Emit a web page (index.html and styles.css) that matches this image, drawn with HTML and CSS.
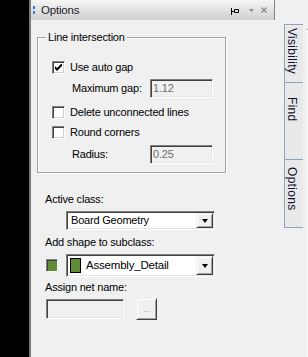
FILE: index.html
```html
<!DOCTYPE html>
<html lang="en">
  <head>
    <meta charset="UTF-8" />
    <title>Options</title>
    <link rel="stylesheet" href="styles.css">
  </head>
  <body>
    <div class="screen">
      <div class="backdrop"></div>

      <div class="pane">
        <div class="titlebar">
          <span class="grip"><i></i><i></i></span>
          <span class="title">Options</span>
          <span class="title-buttons">
            <svg class="pin" width="8" height="7" viewBox="0 0 8 7">
              <path d="M0.5 0v7M1 3.5h2M3.5 1.5h4v3h-4z" fill="none" stroke="#000" stroke-width="1"/>
            </svg>
            <svg class="menu" width="5" height="3" viewBox="0 0 5 3">
              <polygon points="0,0 5,0 2.5,3" fill="#8a8a8a"/>
            </svg>
            <svg class="close" width="6" height="6" viewBox="0 0 6 6">
              <path d="M0.5 0.5l5 5M5.5 0.5l-5 5" stroke="#8a8a8a" stroke-width="1.3"/>
            </svg>
          </span>
        </div>

        <div class="content">
          <div class="group">
            <div class="group-title">Line intersection</div>

            <div class="row check-row first">
              <span class="checkbox">
                <svg width="7" height="7" viewBox="0 0 7 7">
                  <path d="M0 2v3l2 2 5-5V-1L2 4z" fill="#000"/>
                </svg>
              </span>
              <span>Use auto gap</span>
            </div>
            <div class="row field-row gap-row">
              <span class="field-label">Maximum gap:</span>
              <span class="textbox">1.12</span>
            </div>
            <div class="row check-row delete-row">
              <span class="checkbox"></span>
              <span>Delete unconnected lines</span>
            </div>
            <div class="row check-row">
              <span class="checkbox"></span>
              <span>Round corners</span>
            </div>
            <div class="row field-row radius-row">
              <span class="field-label">Radius:</span>
              <span class="textbox">0.25</span>
            </div>
          </div>

          <div class="label class-label">Active class:</div>
          <div class="combo class-combo">
            <span class="combo-text">Board Geometry</span>
            <span class="combo-btn"><i class="arrow"></i></span>
          </div>

          <div class="label">Add shape to subclass:</div>
          <div class="subclass-row">
            <span class="swatch-small"></span>
            <div class="combo subclass-combo">
              <span class="swatch"></span>
              <span class="combo-text">Assembly_Detail</span>
              <span class="combo-btn"><i class="arrow"></i></span>
            </div>
          </div>

          <div class="label net-label">Assign net name:</div>
          <div class="net-row">
            <span class="net-input"></span>
            <span class="dots-btn">...</span>
          </div>
        </div>
      </div>

      <div class="tabstrip">
        <div class="tabs">
          <div class="tab tab-visibility">Visibility</div>
          <div class="tab tab-find">Find</div>
          <div class="tab tab-options">Options</div>
        </div>
        <div class="edge"></div>
      </div>
    </div>
  </body>
</html>
```

FILE: styles.css
```css
body {
  margin: 0;
  font-family: "Liberation Sans", Arial, sans-serif;
  font-size: 11px;
  line-height: 13px;
  letter-spacing: -0.2px;
  color: #000;
  background: #f0f0f0;
}

.screen {
  display: flex;
  width: 308px;
  height: 357px;
  overflow: hidden;
}

.backdrop {
  flex: none;
  width: 29px;
  background: #000;
  border-right: 2px solid #7a7a7a;
}

.pane {
  flex: none;
  width: 244px;
  display: flex;
  flex-direction: column;
}

/* title bar */
.titlebar {
  height: 20px;
  box-sizing: border-box;
  display: flex;
  align-items: center;
  padding: 0 7px 0 2px;
  background: linear-gradient(#f6f6f6, #cfcfcf);
  border-right: 1px solid #858585;
}

.grip {
  display: flex;
  flex-direction: column;
  gap: 2px;
  margin-right: 6px;
}

.grip i {
  display: block;
  width: 2px;
  height: 3px;
  background: #2b7de0;
}

.title {
  color: #1c1c30;
  font-size: 11.5px;
}

.title-buttons {
  margin-left: auto;
  display: flex;
  align-items: center;
}

.pin {
  margin-top: 3px;
}

.menu {
  margin-left: 10px;
}

.close {
  margin-left: 7px;
}

/* content */
.content {
  padding: 17px 0 0 6px;
}

.group {
  width: 189px;
  height: 136px;
  box-sizing: border-box;
  border: 1px solid #a0a0a0;
  box-shadow: inset 1px 1px #fff, 1px 1px #fff;
}

.group-title {
  width: max-content;
  margin: -7px 0 0 8px;
  padding: 0 2px;
  background: #f0f0f0;
}

.row {
  display: flex;
  align-items: center;
  height: 19px;
}

.row.first {
  margin-top: 14px;
}

.gap-row {
  margin-top: 2px;
}

.delete-row {
  margin-top: 5px;
}

.check-row + .check-row {
  margin-top: 1px;
}

.radius-row {
  margin-top: 3px;
}

.check-row {
  padding-left: 14px;
}

.checkbox {
  width: 13px;
  height: 13px;
  box-sizing: border-box;
  margin-right: 5px;
  display: flex;
  align-items: center;
  justify-content: center;
  background: #fff;
  border: 1px solid;
  border-color: #808080 #fff #fff #808080;
  box-shadow: inset 1px 1px #404040, inset -1px -1px #d4d0c8;
}

.field-row {
  padding-left: 34px;
}

.field-label {
  width: 78px;
}

.textbox,
.net-input {
  box-sizing: border-box;
  width: 63px;
  height: 19px;
  padding: 2px 0 0 2px;
  color: #6d6d6d;
  background: #f0f0f0;
  border: 1px solid;
  border-color: #808080 #fff #fff #808080;
  box-shadow: inset 1px 1px #404040, inset -1px -1px #e3e3e3;
}

.label {
  margin: 6px 0 0 8px;
}

.class-label {
  margin-top: 20px;
}

.combo {
  box-sizing: border-box;
  width: 149px;
  height: 19px;
  padding: 1px;
  display: flex;
  align-items: center;
  background: #fff;
  border: 1px solid;
  border-color: #808080 #fff #fff #808080;
  box-shadow: inset 1px 1px #404040, inset -1px -1px #e3e3e3;
}

.class-combo {
  margin: 5px 0 0 29px;
}

.combo-text {
  flex: 1;
  padding-left: 3px;
}

.combo-btn {
  align-self: stretch;
  width: 17px;
  box-sizing: border-box;
  display: flex;
  align-items: center;
  justify-content: center;
  background: #f0f0f0;
  border: 1px solid;
  border-color: #f0f0f0 #404040 #404040 #f0f0f0;
  box-shadow: inset 1px 1px #fff, inset -1px -1px #a0a0a0;
}

.arrow {
  width: 0;
  height: 0;
  border-left: 3.5px solid transparent;
  border-right: 3.5px solid transparent;
  border-top: 4px solid #000;
}

.subclass-row {
  display: flex;
  align-items: center;
  margin: 5px 0 0 9px;
}

.swatch-small {
  width: 12px;
  height: 13px;
  box-sizing: border-box;
  margin-right: 8px;
  background: #5f8c35;
  border: 1px solid;
  border-color: #808080 #fff #fff #808080;
  box-shadow: inset 1px 1px #404040;
}

.subclass-combo {
  height: 23px;
}

.subclass-combo .combo-text {
  padding-left: 5px;
  font-size: 11.5px;
}

.swatch {
  width: 11px;
  height: 15px;
  box-sizing: border-box;
  margin-left: 2px;
  background: #5f8c35;
  border: 1px solid #000;
}

.net-label {
  margin-top: 4px;
}

.net-row {
  display: flex;
  align-items: center;
  height: 22px;
  margin: 4px 0 0 9px;
}

.net-input {
  width: 78px;
  height: 20px;
}

.dots-btn {
  box-sizing: border-box;
  width: 21px;
  height: 22px;
  margin-left: 12px;
  display: flex;
  align-items: center;
  justify-content: center;
  color: #a0a0a0;
  font-size: 9px;
  background: #f0f0f0;
  border: 1px solid;
  border-color: #f0f0f0 #404040 #404040 #f0f0f0;
  box-shadow: inset 1px 1px #fff, inset -1px -1px #a0a0a0;
}

/* side tabs */
.tabstrip {
  flex: 1;
  display: flex;
}

.tabs {
  padding: 24px 0 0 9px;
}

.edge {
  width: 2px;
  margin-left: auto;
  background: #f7f7f7;
  border-top: 1px solid #b0b0b0;
  margin-top: 29px;
}

.tab {
  writing-mode: vertical-rl;
  box-sizing: border-box;
  width: 19px;
  padding-right: 4px;
  font-size: 12px;
  line-height: 14px;
  letter-spacing: 0.3px;
  color: #10102a;
  background: #e9e9e9;
  border: 1px solid #8da2bb;
  border-right: none;
  border-bottom: none;
}

.tab-visibility {
  height: 58px;
  padding-top: 3px;
}

.tab-find {
  height: 77px;
  padding-top: 14px;
}

.tab-options {
  height: 69px;
  padding-top: 7px;
  border-bottom: 1px solid #8da2bb;
}
```
